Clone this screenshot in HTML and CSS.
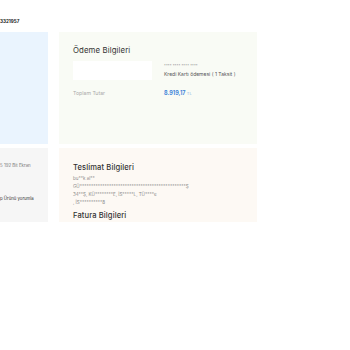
FILE: index.html
```html
<!DOCTYPE html>
<html lang="tr">
<head>
    <meta charset="UTF-8">
    <meta name="viewport" content="width=device-width, initial-scale=1.0">
    <title>Sipariş Detayı</title>
    <link rel="stylesheet" href="styles.css">
</head>
<body>
    <div class="page">
        <div class="order-no">3321957</div>

        <div class="grid">
            <div class="card card-blue"></div>

            <!-- Ödeme -->
            <div class="card card-pay">
                <h2>Ödeme Bilgileri</h2>
                <div class="pay-row">
                    <div class="card-box"></div>
                    <div class="pay-info">
                        <div class="masked">**** **** **** ****</div>
                        <div class="method">Kredi Kartı ödemesi ( 1 Taksit )</div>
                    </div>
                </div>
                <div class="pay-row total">
                    <div class="total-label">Toplam Tutar</div>
                    <div class="total-value">8.919,17 <span>TL</span></div>
                </div>
            </div>

            <div class="card card-gray">
                <div class="product">5 192 Bit Ekran</div>
                <div class="review">p Ürünü yorumla</div>
            </div>

            <!-- Teslimat -->
            <div class="card card-ship">
                <h2>Teslimat Bilgileri</h2>
                <div class="address">
                    <p>bu**k al**</p>
                    <p>GÜ***********************************************Ş</p>
                    <p>34**Ş, KÜ********E, İS*****L, TÜ****e</p>
                    <p>, İS**********8</p>
                </div>
                <h2 class="invoice">Fatura Bilgileri</h2>
            </div>
        </div>
    </div>
</body>
</html>
```

FILE: styles.css
```css
body {
    margin: 0;
    font-family: Inter, "Noto Sans", sans-serif;
    background-color: white;
    color: #333;
}
.page {
    padding-top: 18px;
}
.order-no {
    font-size: 4.6px;
    font-weight: 700;
    line-height: 7px;
    color: #222;
    margin-bottom: 7px;
}
.grid {
    display: grid;
    grid-template-columns: 48px 198px;
    grid-template-rows: 112px 74px;
    column-gap: 11px;
    row-gap: 4px;
}
.card {
    box-sizing: border-box;
    overflow: hidden;
}
.card h2 {
    margin: 0;
    font-size: 7.8px;
    font-weight: 400;
    line-height: 10px;
    color: #333;
    letter-spacing: 0.1px;
}
.card-blue {
    background-color: #eaf4fe;
}
.card-pay {
    background-color: #f9fbf5;
    padding: 13px 14px;
}
.card-pay h2 {
    margin-bottom: 6px;
}
.pay-row {
    display: grid;
    grid-template-columns: 79px 1fr;
    column-gap: 12px;
}
.card-box {
    height: 19px;
    background-color: white;
}
.pay-info {
    padding-top: 3px;
}
.masked {
    font-size: 3.6px;
    line-height: 5px;
    color: #999;
    letter-spacing: 0.1px;
}
.method {
    margin-top: 2px;
    font-size: 5px;
    line-height: 7px;
    color: #555;
}
.pay-row.total {
    margin-top: 10px;
    align-items: center;
}
.total-label {
    font-size: 5.2px;
    color: #aaa;
}
.total-value {
    font-size: 5.5px;
    font-weight: 700;
    color: #3f84d9;
}
.total-value span {
    font-size: 4px;
    font-weight: 400;
    color: #8fb3e0;
}
.card-gray {
    background-color: #f6f6f6;
    padding-top: 15px;
}
.product {
    font-size: 4.4px;
    line-height: 6px;
    color: #777;
}
.review {
    margin-top: 27px;
    font-size: 4.3px;
    line-height: 6px;
    color: #333;
}
.card-ship {
    background-color: #fdf9f4;
    padding: 15px 14px 0;
}
.card-ship h2 {
    font-weight: 500;
    font-size: 7.6px;
}
.address {
    margin-top: 2px;
}
.address p {
    margin: 0;
    font-size: 4.5px;
    line-height: 8px;
    color: #8a8a8a;
    white-space: nowrap;
}
.card-ship h2.invoice {
    margin-top: 4px;
}
```
